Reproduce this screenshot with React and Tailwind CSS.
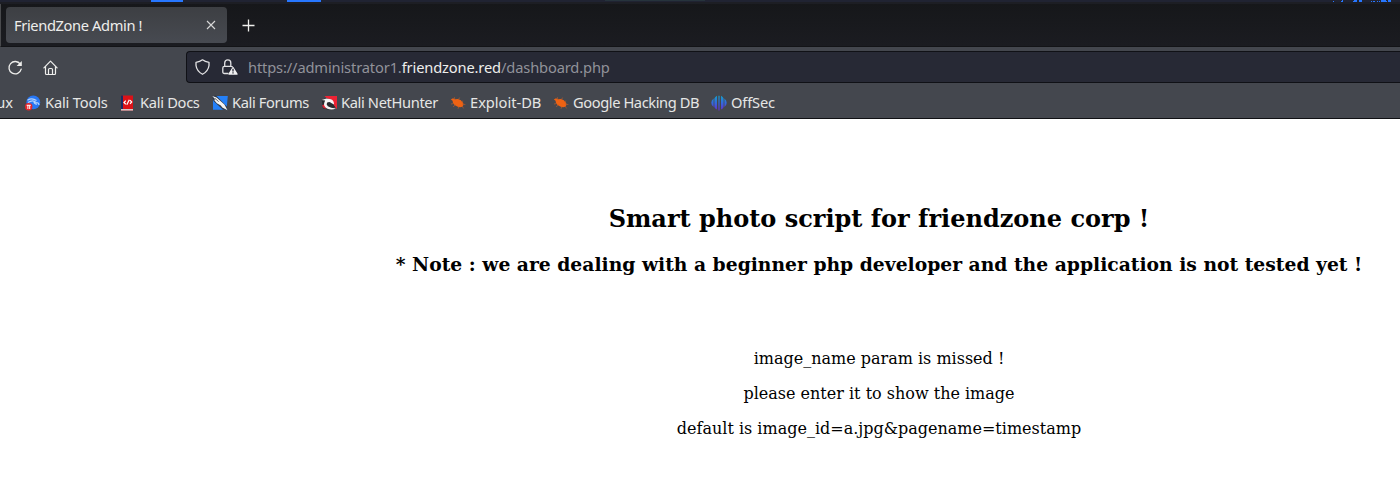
const ToolsIcon = () => (
  <svg viewBox="0 0 16 16" className="size-4 shrink-0">
    <circle cx="8.3" cy="7.3" r="6.9" fill="#2777f5" />
    <path d="M2.5 5.2Q7 2.4 11.5 5.5M3 7.5Q8 4.3 11 7.5Q14 7.6 14 10M9 6.8Q9 9 12 9.3" fill="none" stroke="#b7d3fa" strokeWidth="1.1" />
    <circle cx="3.7" cy="11.8" r="3.7" fill="#e5252a" />
    <path d="M1.7 10.3H5.8M2.9 10.4V14M4.7 10.4V14" stroke="#fff" strokeWidth="1" fill="none" />
  </svg>
);

const DocsIcon = () => (
  <svg viewBox="0 0 16 16" className="size-4 shrink-0">
    <path d="M1 .5H13V15.5H1Z" fill="#db1218" />
    <path d="M1 .5H3V14H1Z" fill="#192c65" />
    <path d="M1 14H13V15.6H1Z" fill="#d4c6c8" />
    <path d="M5.8 5.6L4 7.5L5.8 9.2M10 5.2L11.7 7L10 8.9M9.3 4.7L6.8 9.8" fill="none" stroke="#fff" strokeWidth="1.2" />
  </svg>
);

const ForumsIcon = () => (
  <svg viewBox="0 0 16 16" className="size-4 shrink-0">
    <path d="M1 1H15.8L14.5 14.8H1Z" fill="#2480f8" />
    <path d="M.2 1L4 .5L14.8 11.5L15.5 15L11 14.8L1.5 6Z" fill="#303947" />
    <path d="M.2 1L4.5 2.6L9.6 7L12.4 9.4L15.5 15.2L10.3 12.4L8.8 10.6L4.8 8.2L2 4.8L3.5 4.6Z" fill="#f3f3f3" />
    <path d="M3 3.4L6.6 6.6" stroke="#444" strokeWidth=".8" />
  </svg>
);

const HunterIcon = () => (
  <svg viewBox="0 0 16 16" className="size-4 shrink-0">
    <path d="M3.5 1H16V14L11 8Z" fill="#ed2334" />
    <path d="M.7 5L5 3L11 5L14 12L9 15L2 13.5Z" fill="#272a2e" />
    <path d="M11 5L16 1V14L13 10Z" fill="#ed2334" />
    <path d="M1 10.5L4.5 8.5L5 13.8L2.5 13Z" fill="#d92434" />
    <path d="M.5 5L5.5 3.4L10 4.3Q13.2 5.7 13 9.6L10.2 8Q8.4 6 6.2 7.6Q4.8 9.5 6.8 11.2Q9.5 13.2 15 13.5Q10 15.3 5.8 13.4Q1.8 11 3.5 7L4.2 5.6Z" fill="#f5f5f5" />
  </svg>
);

const BugIcon = () => (
  <svg viewBox="0 0 16 16" className="size-4 shrink-0">
    <path d="M.8 4.6L3 3.2L5 4.2L8 4Q11.2 4.6 13.2 8Q14 10.8 12.4 11.8Q9.8 12.8 7.2 11.6Q4 10.4 2.9 7.8L2.6 5.8Z" fill="#ee6213" />
    <path d="M4.8 4.8L4.4 2.2M8.4 4.6L9.6 2.6M11.2 6.8L13.2 6M3.8 8.5L1 9M5.4 10L3 11.8M8.8 11.6L8 13.8M12 9L15.4 9.6M12 11L13.6 13.4" stroke="#b85c2b" strokeWidth=".7" fill="none" />
  </svg>
);

const OffSecIcon = () => (
  <svg viewBox="0 0 16 16" className="size-4 shrink-0">
    <defs>
      <linearGradient id="osg" gradientUnits="userSpaceOnUse" x1="0" y1="0" x2="0" y2="16">
        <stop offset="0" stopColor="#10a5c8" />
        <stop offset=".5" stopColor="#3468df" />
        <stop offset="1" stopColor="#6829ca" />
      </linearGradient>
    </defs>
    <path d="M6 .8V14.6Q3.8 13.8 3.4 12V3.4Q4 1.8 6 .8ZM10 .8V14.6Q12.2 13.8 12.6 12V3.4Q12 1.8 10 .8ZM2.6 3.4V12Q.3 10.4 .3 7.7Q.3 5 2.6 3.4ZM13.4 3.4V12Q15.7 10.4 15.7 7.7Q15.7 5 13.4 3.4ZM7.4 .8H8.6V15.5H7.4Z" fill="url(#osg)" />
  </svg>
);

const bookmarks = [
  { label: "Kali Tools", Icon: ToolsIcon, width: "w-[95px]", tracking: "tracking-[-0.17px]" },
  { label: "Kali Docs", Icon: DocsIcon, width: "w-[92px]", tracking: "tracking-[-0.3px]" },
  { label: "Kali Forums", Icon: ForumsIcon, width: "w-[109px]", tracking: "tracking-[-0.36px]" },
  { label: "Kali NetHunter", Icon: HunterIcon, width: "w-[129px]", tracking: "tracking-[-0.36px]" },
  { label: "Exploit-DB", Icon: BugIcon, width: "w-[103px]", tracking: "tracking-[-0.02px]" },
  { label: "Google Hacking DB", Icon: BugIcon, width: "w-[158px]", tracking: "tracking-[-0.41px]" },
  { label: "OffSec", Icon: OffSecIcon, width: "w-[80px]", tracking: "tracking-[-0.15px]" },
];

function DesktopEdge() {
  return (
    <svg width="1400" height="4" className="block shrink-0" shapeRendering="crispEdges">
      <rect width="1400" height="2" fill="#202332" />
      <rect y="2" width="1400" height="2" fill="#1d1e24" />
      <rect x="605" width="100" height="1" fill="#26333c" />
      <path d="M151 0H183V2H151ZM287 0H321V2H287ZM1333 1H1334V2H1333ZM1341 1H1342V0H1343V2H1341ZM1353 1H1354V0H1357V2H1353ZM1359 0H1362V2H1359ZM1371 1H1372V2H1371ZM1373 1H1375V2H1373ZM1377 1H1378V2H1377ZM1379 1H1380V2H1379ZM1381 0H1386V2H1381ZM1386 1H1387V2H1386ZM1388 0H1391V2H1388Z" fill="#2777ff" />
    </svg>
  );
}

function TabStrip() {
  return (
    <div className="flex h-[43px] items-start border-b border-[#131417] border-l border-l-[#494a4d] bg-linear-to-b from-[#16171a] to-[#1b1c21] pt-[3px] pl-[5px]">
      <div className="flex h-9 w-[221px] items-center justify-between rounded-[4px] bg-linear-to-b from-[#3d3f43] to-[#474a51] pr-[11px] pl-2 text-[14.67px] text-[#eeeeec]">
        <span className="tracking-[-0.37px] whitespace-nowrap">FriendZone Admin !</span>
        <svg width="10" height="10" viewBox="0 0 10 10">
          <path d="M1 1L9 9M9 1L1 9" stroke="#d8d8d8" strokeWidth="1.1" />
        </svg>
      </div>
      <svg width="13" height="13" viewBox="0 0 13 13" className="mt-3 ml-[15px]">
        <path d="M6.5 .5V12.5M.5 6.5H12.5" stroke="#eeeeec" strokeWidth="1.3" />
      </svg>
    </div>
  );
}

function Toolbar() {
  return (
    <div className="flex h-10 items-center pl-[7px]">
      <svg width="16" height="16" viewBox="0 0 16 16" className="mt-px shrink-0" fill="none" stroke="#eeeeec" strokeWidth="1.3">
        <path d="M13.3 4.2A6.2 6.2 0 1 0 14.2 9.2" strokeLinecap="round" />
        <path d="M14.8 .9V6.1H9.6Z" fill="#eeeeec" stroke="none" />
      </svg>
      <svg width="16" height="16" viewBox="0 0 16 16" className="mt-px ml-5 shrink-0" fill="none" stroke="#eeeeec" strokeWidth="1.2" strokeLinejoin="round" strokeLinecap="round">
        <path d="M.9 7.8L7.5 1.1L14.1 7.8M2.5 6.5V13.5Q2.5 14.5 3.5 14.5H11.5Q12.5 14.5 12.5 13.5V6.5" />
        <path d="M5.5 14.4V9.5Q5.5 8.5 6.5 8.5H8.5Q9.5 8.5 9.5 9.5V14.4" />
      </svg>
      <div className="ml-[127px] flex h-8 grow items-center rounded-l-[4px] border border-r-0 border-[#101116] bg-[#272935] pl-2 text-[14.67px]">
        <svg width="16" height="16" viewBox="0 0 16 16" className="shrink-0" fill="none" stroke="#e2e2e4" strokeWidth="1.3" strokeLinejoin="round">
          <path d="M7.5 .8Q10 2.8 14 3.3V6.5Q13.3 12.1 7.5 15.3Q1.7 12.1 1 6.5V3.3Q5 2.8 7.5 .8Z" />
        </svg>
        <svg width="17" height="16" viewBox="0 0 17 16" className="ml-[11px] shrink-0" fill="none" stroke="#e2e2e4" strokeWidth="1.3">
          <path d="M6.5 14.5H2.5Q.8 14.5 .8 13V9Q.8 7.4 2.5 7.4H9Q10.4 7.4 10.4 8.2M2.7 7.2V4Q2.9 .9 5.8 .9Q8.8 .9 8.8 4V7.2" />
          <path d="M11 8.6L15 15.1H7Z" fill="#f1f1f2" stroke="#f1f1f2" strokeLinejoin="round" />
          <path d="M11 9.8V12.5M11 13.3V14.6" stroke="#272935" strokeWidth="1.3" />
        </svg>
        <span className="ml-[9px] tracking-[-0.14px] whitespace-nowrap text-[#91929a]">
          https://administrator1.<span className="text-[#eeeeec]">friendzone.red</span>/dashboard.php
        </span>
      </div>
    </div>
  );
}

function Bookmarks() {
  return (
    <div className="flex h-[31px] items-center overflow-hidden text-[14.67px] text-[#e6e6e5]">
      <div className="-mt-px flex w-[25px] shrink-0 justify-end pr-3">ux</div>
      {bookmarks.map(({ label, Icon, width, tracking }) => (
        <div key={label} className={`flex shrink-0 items-center gap-1 whitespace-nowrap ${width} ${tracking}`}>
          <Icon />
          <span className="-mt-px">{label}</span>
        </div>
      ))}
    </div>
  );
}

export default function App() {
  return (
    <div className="flex h-[493px] w-[1400px] flex-col overflow-hidden bg-white">
      <header className="shrink-0 font-['Noto_Sans',sans-serif] leading-5 whitespace-nowrap">
        <DesktopEdge />
        <TabStrip />
        <div className="border-b border-[#101114] bg-[#44474e]">
          <Toolbar />
          <Bookmarks />
        </div>
      </header>
      <main className="ml-[358px] flex w-[1042px] flex-col items-center font-['DejaVu_Serif',serif] text-base leading-[19px] whitespace-nowrap text-black">
        <h2 className="mt-[86px] text-2xl leading-7 font-bold">Smart photo script for friendzone corp !</h2>
        <h3 className="mt-5 text-[18.74px] leading-[22px] font-bold">
          * Note : we are dealing with a beginner php developer and the application is not tested yet !
        </h3>
        <p className="mt-[74px]">image_name param is missed !</p>
        <p className="mt-4">please enter it to show the image</p>
        <p className="mt-4">default is image_id=a.jpg&amp;pagename=timestamp</p>
      </main>
    </div>
  );
}
